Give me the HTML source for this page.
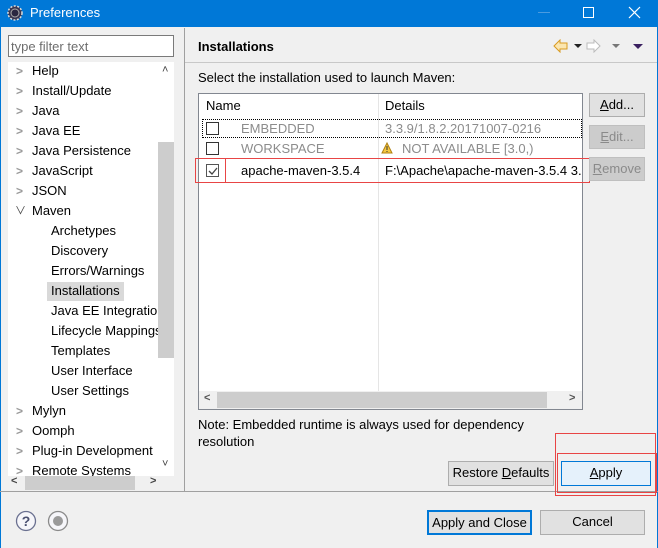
<!DOCTYPE html>
<html><head><style>
*{box-sizing:border-box;margin:0;padding:0}
body{width:658px;height:548px;overflow:hidden;background:#f0f0f0;font-family:"Liberation Sans","Noto Sans CJK SC",sans-serif;font-size:13px;color:#000;position:relative}
.a{position:absolute}
.title{left:0;top:0;width:658px;height:27px;background:#0078d7;color:#fff;font-size:13px}
.btn{position:absolute;background:#e1e1e1;border:1px solid #adadad;text-align:center;line-height:22px}
.tree div{position:absolute;white-space:nowrap}
.chev{color:#999;font-size:12px;font-weight:bold}
.cb{position:absolute;width:13px;height:13px;border:1px solid #333;background:#fff}
</style></head><body>
<div class="a title">
<svg class="a" style="left:7px;top:5px" width="16" height="16"><circle cx="8" cy="8" r="7" fill="#3a3650" stroke="#ddd" stroke-width="1.5" stroke-dasharray="2 1.5"/><circle cx="8" cy="8" r="4" fill="#2a2640" stroke="#aaa"/></svg>
<div class="a" style="left:30px;top:5px">Preferences</div>
<div class="a" style="left:538px;top:12px;width:12px;height:1px;background:#4a9be0"></div>
<div class="a" style="left:583px;top:7px;width:11px;height:11px;border:1px solid #fff"></div>
<svg class="a" style="left:628px;top:6px" width="13" height="13"><path d="M1 1L12 12M12 1L1 12" stroke="#fff" stroke-width="1.2"/></svg>
</div>
<div class="a" style="left:0;top:27px;width:1px;height:521px;background:#0078d7"></div>
<div class="a" style="right:0;top:27px;width:1px;height:521px;background:#0078d7"></div>
<!-- left -->
<div class="a" style="left:8px;top:35px;width:166px;height:22px;background:#fff;border:1px solid #7a7a7a;color:#6d6d6d;padding:3px 2px;font-size:13px">type filter text</div>
<div class="a tree" style="left:8px;top:62px;width:166px;height:428px;background:#fff;overflow:hidden">
<div class="chev" style="left:8px;top:2px">&gt;</div><div style="left:24px;top:1px">Help</div>
<div class="chev" style="left:8px;top:22px">&gt;</div><div style="left:24px;top:21px">Install/Update</div>
<div class="chev" style="left:8px;top:42px">&gt;</div><div style="left:24px;top:41px">Java</div>
<div class="chev" style="left:8px;top:62px">&gt;</div><div style="left:24px;top:61px">Java EE</div>
<div class="chev" style="left:8px;top:82px">&gt;</div><div style="left:24px;top:81px">Java Persistence</div>
<div class="chev" style="left:8px;top:102px">&gt;</div><div style="left:24px;top:101px">JavaScript</div>
<div class="chev" style="left:8px;top:122px">&gt;</div><div style="left:24px;top:121px">JSON</div>
<div style="left:7px;top:140px;color:#444;font-size:11px">&#8744;</div><div style="left:24px;top:141px">Maven</div>
<div style="left:43px;top:161px">Archetypes</div>
<div style="left:43px;top:181px">Discovery</div>
<div style="left:43px;top:201px">Errors/Warnings</div>
<div style="left:39px;top:220px;width:77px;height:19px;background:#d9d9d9"></div>
<div style="left:43px;top:221px">Installations</div>
<div style="left:43px;top:241px">Java EE Integration</div>
<div style="left:43px;top:261px">Lifecycle Mappings</div>
<div style="left:43px;top:281px">Templates</div>
<div style="left:43px;top:301px">User Interface</div>
<div style="left:43px;top:321px">User Settings</div>
<div class="chev" style="left:8px;top:342px">&gt;</div><div style="left:24px;top:341px">Mylyn</div>
<div class="chev" style="left:8px;top:362px">&gt;</div><div style="left:24px;top:361px">Oomph</div>
<div class="chev" style="left:8px;top:382px">&gt;</div><div style="left:24px;top:381px">Plug-in Development</div>
<div class="chev" style="left:8px;top:402px">&gt;</div><div style="left:24px;top:401px">Remote Systems</div>
<div style="left:150px;top:0;width:16px;height:414px;background:#fff"></div>
<div style="left:154px;top:2px;font-size:11px;color:#444">&#708;</div>
<div style="left:150px;top:80px;width:16px;height:216px;background:#cdcdcd"></div>
<div style="left:154px;top:396px;font-size:11px;color:#444">&#709;</div>
<div style="left:0;top:414px;width:166px;height:14px;background:#f0f0f0"></div>
<div style="left:3px;top:413px;font-size:11px;color:#444;font-weight:bold">&lt;</div>
<div style="left:17px;top:414px;width:110px;height:14px;background:#cdcdcd"></div>
<div style="left:142px;top:413px;font-size:11px;color:#444;font-weight:bold">&gt;</div>
</div>
<div class="a" style="left:184px;top:28px;width:1px;height:464px;background:#a0a0a0"></div>
<div class="a" style="left:0;top:491px;width:658px;height:1px;background:#a0a0a0"></div>
<!-- right header -->
<div class="a" style="left:198px;top:39px;font-weight:bold;font-size:13px">Installations</div>
<div class="a" style="left:185px;top:62px;width:472px;height:1px;background:#c8c8c8"></div>
<svg class="a" style="left:553px;top:39px" width="100" height="14"><path d="M1 7L7 1V4H14V10H7V13Z" fill="#fbe6b0" stroke="#d89a20"/><path d="M21 5L29 5L25 9Z" fill="#222"/><path d="M47 7L41 1V4H34V10H41V13Z" fill="#fff" stroke="#bbb"/><path d="M59 5L67 5L63 9Z" fill="#777"/><path d="M80 5L90 5L85 10Z" fill="#3a2060"/></svg>
<div class="a" style="left:198px;top:70px">Select the installation used to launch Maven:</div>
<!-- table -->
<div class="a" style="left:198px;top:93px;width:385px;height:317px;background:#fff;border:1px solid #828790">
<div class="a" style="left:7px;top:4px">Name</div>
<div class="a" style="left:179px;top:0;width:1px;height:297px;background:#e5e5e5"></div>
<div class="a" style="left:186px;top:4px">Details</div>
<div class="a" style="left:3px;top:25px;width:380px;height:19px;border:1px dotted #000"></div>
<div class="cb" style="left:7px;top:28px"></div>
<div class="a" style="left:42px;top:27px;color:#8c8c8c">EMBEDDED</div>
<div class="a" style="left:186px;top:27px;color:#8c8c8c">3.3.9/1.8.2.20171007-0216</div>
<div class="cb" style="left:7px;top:48px"></div>
<div class="a" style="left:42px;top:47px;color:#8c8c8c">WORKSPACE</div>
<svg class="a" style="left:182px;top:48px" width="12" height="12"><path d="M6 1L11 11H1Z" fill="#f5c842" stroke="#b08010"/><path d="M6 4V8M6 9V10" stroke="#333"/></svg>
<div class="a" style="left:203px;top:47px;color:#8c8c8c">NOT AVAILABLE [3.0,)</div>
<div class="cb" style="left:7px;top:70px;border-color:#555"></div>
<svg class="a" style="left:8px;top:71px" width="12" height="12"><path d="M2 6L5 9L10 3" fill="none" stroke="#444" stroke-width="1.3"/></svg>
<div class="a" style="left:42px;top:69px">apache-maven-3.5.4</div>
<div class="a" style="left:186px;top:69px;white-space:nowrap;width:197px;overflow:hidden">F:\Apache\apache-maven-3.5.4 3.5.4</div>
<div class="a" style="left:0;top:297px;width:383px;height:18px;background:#f0f0f0"></div>
<div class="a" style="left:5px;top:298px;font-size:11px;color:#555;font-weight:bold">&lt;</div>
<div class="a" style="left:18px;top:298px;width:330px;height:16px;background:#cdcdcd"></div>
<div class="a" style="left:370px;top:298px;font-size:11px;color:#555;font-weight:bold">&gt;</div>
</div>
<div class="a" style="left:195px;top:158px;width:395px;height:25px;border:1px solid #e84545"></div>
<div class="a" style="left:195px;top:158px;width:31px;height:25px;border:1px solid #e84545"></div>
<div class="btn" style="left:589px;top:93px;width:56px;height:24px"><u>A</u>dd...</div>
<div class="btn" style="left:589px;top:125px;width:56px;height:24px;background:#ccc;border-color:#bfbfbf;color:#8a8a8a"><u>E</u>dit...</div>
<div class="btn" style="left:589px;top:157px;width:56px;height:24px;background:#ccc;border-color:#bfbfbf;color:#8a8a8a"><u>R</u>emove</div>
<div class="a" style="left:198px;top:416px;line-height:17px">Note: Embedded runtime is always used for dependency<br>resolution</div>
<div class="btn" style="left:448px;top:461px;width:106px;height:25px">Restore <u>D</u>efaults</div>
<div class="btn" style="left:561px;top:461px;width:90px;height:25px;background:#e5f1fb;border-color:#0078d7"><u>A</u>pply</div>
<div class="a" style="left:555px;top:433px;width:101px;height:63px;border:1px solid #e84545"></div>
<div class="a" style="left:557px;top:453px;width:100px;height:40px;border:1px solid #e84545"></div>
<!-- bottom -->
<svg class="a" style="left:15px;top:510px" width="60" height="24"><circle cx="11" cy="11" r="9.5" fill="#f6f6fa" stroke="#6a7090" stroke-width="1.3"/><text x="11" y="16" text-anchor="middle" font-family="Liberation Sans" font-size="14" font-weight="bold" fill="#4a5070">?</text><circle cx="43" cy="11" r="9.5" fill="#f6f6fa" stroke="#8a8a8a" stroke-width="1.3"/><circle cx="43" cy="11" r="5" fill="#9a9a9a"/></svg>
<div class="btn" style="left:427px;top:510px;width:105px;height:25px;border:2px solid #0078d7;line-height:21px">Apply and Close</div>
<div class="btn" style="left:540px;top:510px;width:105px;height:25px">Cancel</div>
</body></html>
